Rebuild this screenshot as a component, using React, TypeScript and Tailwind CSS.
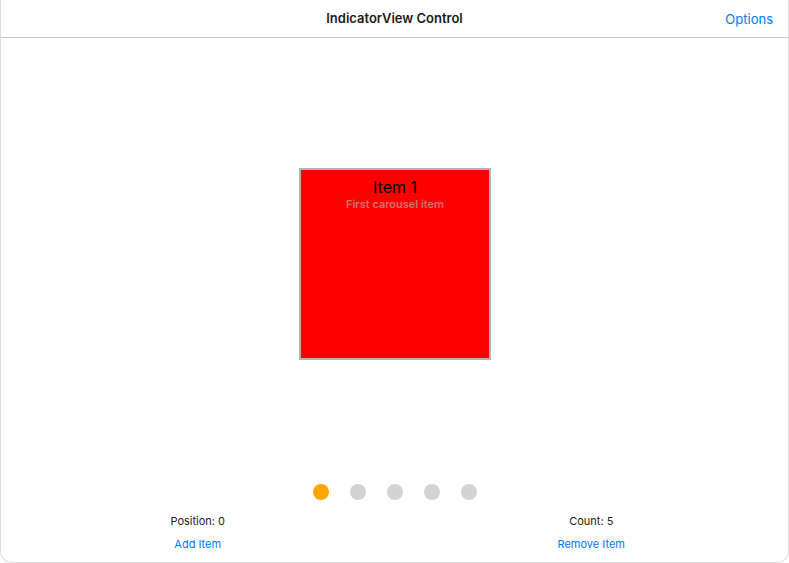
const dots = [true, false, false, false, false];

export default function App() {
  return (
    <div className="h-[563px] w-[789px] bg-white font-['Inter',sans-serif]">
      <div className="flex h-[563px] flex-col overflow-hidden rounded-b-[12px] border-x border-b border-[#dcdcdc] bg-white">
        <header className="relative flex h-[38px] shrink-0 items-center justify-center border-b border-[#c8c8c8]">
          <h1 className="text-[13px] font-semibold text-[#1a1a1a]">IndicatorView Control</h1>
          <button className="absolute right-[15px] top-[10px] text-[13px] leading-[18px] text-[#007aff]">Options</button>
        </header>

        <div className="flex h-[438px] shrink-0 justify-center pt-[130px]">
          <div className="ml-[1px] flex h-[192px] w-[192px] flex-col items-center border-2 border-[#b8b0b0] bg-[#ff0000] pt-[7px]">
            <span className="text-[16px] leading-[20px] text-black">Item 1</span>
            <span className="mt-[1px] text-[11px] font-semibold leading-[13px] text-[#d07070]">First carousel item</span>
          </div>
        </div>

        <div className="mt-[8px] flex justify-center gap-[21px]">
          {dots.map((on, i) => (
            <span
              key={i}
              className={on ? "h-[16px] w-[16px] rounded-full bg-[#ffa500]" : "h-[16px] w-[16px] rounded-full bg-[#d3d3d3]"}
            />
          ))}
        </div>

        <div className="mt-[14px] grid grid-cols-2 text-[11px] leading-[14px]">
          <div className="flex flex-col items-center">
            <span className="text-[#222]">Position: 0</span>
            <button className="mt-[9px] text-[#007aff]">Add Item</button>
          </div>
          <div className="flex flex-col items-center">
            <span className="text-[#222]">Count: 5</span>
            <button className="mt-[9px] text-[#007aff]">Remove Item</button>
          </div>
        </div>
      </div>
    </div>
  );
}
